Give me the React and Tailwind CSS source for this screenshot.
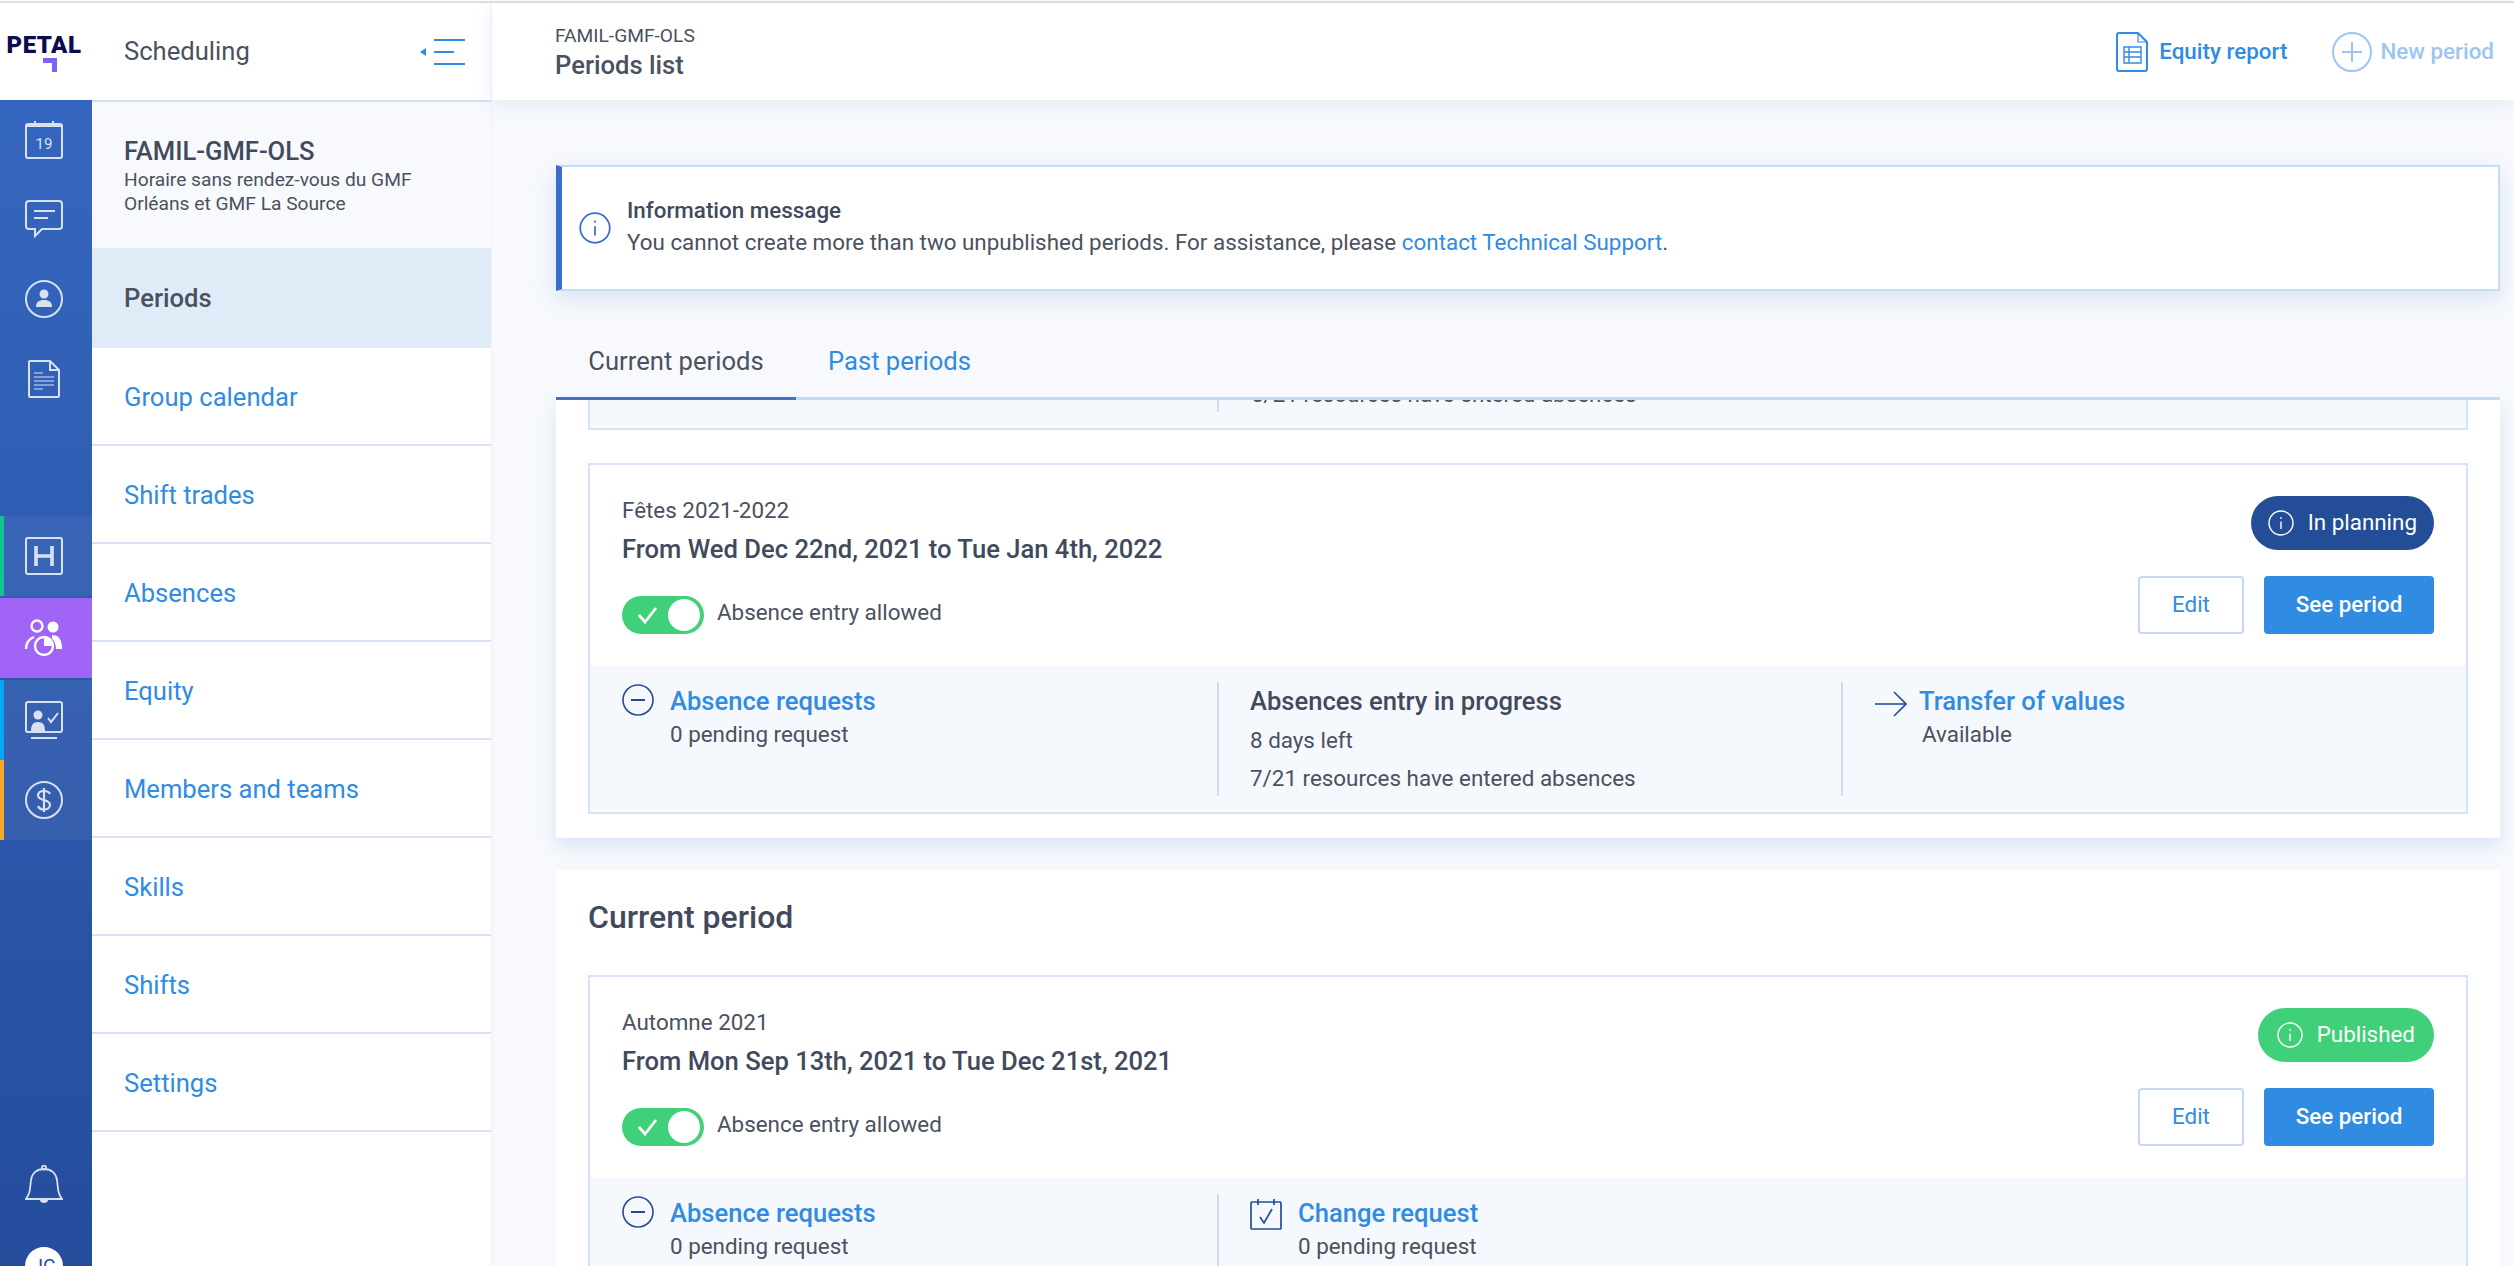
const navItems = ['Group calendar', 'Shift trades', 'Absences', 'Equity', 'Members and teams', 'Skills', 'Shifts', 'Settings'];

function InfoIcon({ className }) {
  return (
    <svg viewBox="0 0 26 26" fill="none" stroke="currentColor" strokeWidth="1.4" className={className}>
      <circle cx="13" cy="13" r="12" />
      <path d="M13 11.5v7.5" />
      <path d="M13 7v1.8" />
    </svg>
  );
}

function MinusIcon() {
  return (
    <svg viewBox="0 0 32 32" fill="none" stroke="#234d9b" className="w-[32px] h-[32px] shrink-0">
      <circle cx="16" cy="16" r="15" strokeWidth="1.6" />
      <path d="M9 16h14" strokeWidth="2" />
    </svg>
  );
}

function ArrowIcon() {
  return (
    <svg viewBox="0 0 32 32" fill="none" stroke="#234d9b" strokeWidth="1.6" className="w-[32px] h-[32px] shrink-0">
      <path d="M0 16h31" />
      <path d="M19 4l12 12-12 12" />
    </svg>
  );
}

function CalendarCheckIcon() {
  return (
    <svg viewBox="0 0 32 32" fill="none" stroke="#234d9b" strokeWidth="1.7" className="w-[32px] h-[32px] shrink-0">
      <rect x="1" y="4" width="30" height="27" rx="1" />
      <path d="M8 1v6M24 1v6" />
      <path d="M10 19l4 6 8-14" />
    </svg>
  );
}

function Toggle() {
  return (
    <div className="w-[82px] h-[38px] rounded-full bg-[#41d07a] flex items-center justify-between pl-[16px] pr-[4px] shrink-0">
      <svg viewBox="0 0 20 18" fill="none" stroke="white" strokeWidth="2.8" className="w-[20px] h-[18px]">
        <path d="M1 9l6 7L18 2" />
      </svg>
      <div className="w-[32px] h-[32px] rounded-full bg-white" />
    </div>
  );
}

function PeriodCard({ name, dates, status, statusClass, statusPad, children }) {
  return (
    <div className="border-2 border-[#d8e2f5] bg-white">
      <div className="h-[201px] flex justify-between pl-[32px] pr-[32px]">
        <div>
          <div className="pt-[32px] text-[22.4px] leading-[26px] text-[#4a5160]">{name}</div>
          <div className="mt-[11px] text-[25.6px] leading-[30px] font-medium text-[#414a5c]">{dates}</div>
          <div className="mt-[32px] flex items-center gap-[13px]">
            <Toggle />
            <span className="pb-[4px] text-[22.4px] text-[#4a5160]">Absence entry allowed</span>
          </div>
        </div>
        <div className="flex flex-col items-end pt-[31px]">
          <div className={`h-[54px] rounded-full flex items-center gap-[14px] text-white text-[22.4px] ${statusClass} ${statusPad}`}>
            <InfoIcon className="w-[26px] h-[26px]" />
            {status}
          </div>
          <div className="mt-[26px] flex gap-[20px]">
            <button className="w-[106px] h-[58px] rounded-[4px] border-2 border-[#c9d6f2] bg-white text-[22.4px] text-[#308be2]">Edit</button>
            <button className="w-[170px] h-[58px] rounded-[4px] bg-[#308be2] text-[22.4px] font-medium text-white">See period</button>
          </div>
        </div>
      </div>
      <div className="h-[146px] bg-[#f5f8fd] py-[16px] flex">{children}</div>
    </div>
  );
}

function RequestCol({ title, icon, width, border, iconPad }) {
  return (
    <div className={`h-[114px] flex gap-[16px] ${width} ${border}`}>
      <div className={iconPad}>{icon}</div>
      <div>
        <div className="text-[25.6px] leading-[38px] font-medium text-[#308be2]">{title}</div>
        <div className="text-[22.4px] leading-[28px] text-[#4a5160]">0 pending request</div>
      </div>
    </div>
  );
}

function RailSlot({ children, accent, active }) {
  return (
    <div className={`h-[80px] flex items-center justify-center border-l-4 ${accent} ${active ? 'bg-[#a064f7]' : 'bg-white/5'}`}>
      <div className="-ml-[8px] flex">{children}</div>
    </div>
  );
}

function Rail() {
  return (
    <div className="w-[92px] h-full shrink-0 bg-gradient-to-b from-[#3566bf] to-[#244d9c] overflow-hidden text-[#d9e1f0]">
      <div className="h-[79px] pr-[4px] flex items-center justify-center">
        <svg viewBox="0 0 38 38" fill="none" stroke="currentColor" strokeWidth="2" className="w-[38px] h-[38px]">
          <rect x="1" y="3" width="36" height="34" rx="2" />
          <path d="M10 0v3M28 0v3M1 5h36" />
          <text x="19" y="28" textAnchor="middle" fontSize="15" fill="currentColor" stroke="none" fontFamily="Roboto">19</text>
        </svg>
      </div>
      <div className="h-[80px] pr-[4px] flex items-center justify-center">
        <svg viewBox="0 0 38 38" fill="none" stroke="currentColor" strokeWidth="2" className="w-[38px] h-[38px]">
          <path d="M4 1h30a3 3 0 013 3v22a3 3 0 01-3 3H17l-7 7v-7H4a3 3 0 01-3-3V4a3 3 0 013-3z" />
          <path d="M9 11h21M9 18h14" />
        </svg>
      </div>
      <div className="h-[80px] pr-[4px] flex items-center justify-center">
        <svg viewBox="0 0 38 38" fill="none" stroke="currentColor" strokeWidth="2" className="w-[38px] h-[38px]">
          <circle cx="19" cy="19" r="18" />
          <circle cx="19" cy="14" r="4.5" fill="currentColor" stroke="none" />
          <path d="M11 27c0-5 3-7 8-7s8 2 8 7z" fill="currentColor" stroke="none" />
        </svg>
      </div>
      <div className="h-[80px] pr-[4px] mb-[97px] flex items-center justify-center">
        <svg viewBox="0 0 32 38" fill="none" stroke="currentColor" strokeWidth="2" className="w-[32px] h-[38px]">
          <path d="M2 1h20l9 9v26a1 1 0 01-1 1H2a1 1 0 01-1-1V2a1 1 0 011-1z" />
          <path d="M22 1v9h9" />
          <path d="M6 13h9M6 17h20M6 21h20M6 25h20M6 29h9" strokeWidth="1.2" />
        </svg>
      </div>
      <RailSlot accent="border-[#12c48f]">
        <svg viewBox="0 0 38 38" fill="none" stroke="currentColor" strokeWidth="2" className="w-[38px] h-[38px]">
          <rect x="1" y="1" width="36" height="36" rx="2" />
          <path d="M11 9v20M27 9v20M11 19h16" strokeWidth="3.6" />
        </svg>
      </RailSlot>
      <div className="h-[2px]" />
      <RailSlot accent="border-[#a064f7]" active>
        <svg viewBox="0 0 38 38" fill="none" stroke="white" strokeWidth="2.4" className="w-[38px] h-[38px]">
          <circle cx="12" cy="7" r="5.5" />
          <circle cx="28" cy="8" r="5.5" fill="white" stroke="none" />
          <path d="M1 30c0-7 3-10 8-12" />
          <path d="M27 16c6 0 10 3 10 14h-6c0-5-2-9-4-10z" fill="white" stroke="none" />
          <circle cx="19" cy="27" r="9" />
          <path d="M19 27v-9a9 9 0 019 9z" fill="white" stroke="none" />
        </svg>
      </RailSlot>
      <div className="h-[2px]" />
      <RailSlot accent="border-[#00a8f5]">
        <svg viewBox="0 0 38 38" fill="none" stroke="currentColor" strokeWidth="2" className="w-[38px] h-[38px]">
          <rect x="1" y="1" width="36" height="30" rx="2" />
          <path d="M6 37h26" />
          <circle cx="13" cy="14" r="4.5" fill="currentColor" stroke="none" />
          <path d="M6 30c0-6 2-9 7-9s7 3 7 9z" fill="currentColor" stroke="none" />
          <path d="M23 17l3 4 7-9" />
        </svg>
      </RailSlot>
      <RailSlot accent="border-[#f9a825]">
        <svg viewBox="0 0 38 38" fill="none" stroke="currentColor" strokeWidth="2" className="w-[38px] h-[38px]">
          <circle cx="19" cy="19" r="18" />
          <path d="M25 13c-1-2-3-3-6-3-4 0-6 2-6 4.500 0 6 12 3 12 9.500 0 3-3 4.500-6 4.500s-5-1-6-3.500M19 7v24" strokeWidth="2.200" />
        </svg>
      </RailSlot>
      <div className="mt-[325px] pr-[4px] flex justify-center">
        <svg viewBox="0 0 38 38" fill="none" stroke="currentColor" strokeWidth="1.8" className="w-[38px] h-[38px]">
          <circle cx="19" cy="2.500" r="2" />
          <path d="M1 34h36c-4-5-4-10-5-19-1-7-6-11-13-11S7 8 6 15C5 24 5 29 1 34z" />
          <path d="M15 35h8c0 4-8 4-8 0z" fill="currentColor" stroke="none" />
        </svg>
      </div>
      <div className="mt-[44px] ml-[25px] w-[38px] h-[38px] rounded-full bg-white text-[#234d9b] text-[19px] flex items-center justify-center">JC</div>
    </div>
  );
}

function Sidebar() {
  return (
    <div className="w-[400px] h-full shrink-0 flex flex-col bg-white border-r border-[#eef2fb]">
      <div className="h-[97px] shrink-0 flex items-center justify-between pl-[32px] pr-[25px]">
        <span className="text-[25.6px] text-[#4a5160]">Scheduling</span>
        <svg viewBox="0 0 46 26" fill="none" stroke="#308be2" strokeWidth="2" className="w-[46px] h-[26px]">
          <path d="M14 1h31M14 13h20M14 25h31" />
          <path d="M0 13l6-4v8z" fill="#308be2" stroke="none" />
        </svg>
      </div>
      <div className="h-[148px] shrink-0 bg-[#f7f9fd] border-t-2 border-[#d3dff4] pl-[32px] pt-[34px]">
        <div className="text-[25.6px] leading-[30px] font-medium text-[#414a5c]">FAMIL-GMF-OLS</div>
        <div className="mt-[2px] text-[19.2px] leading-[24px] text-[#4a5160] w-[320px]">Horaire sans rendez-vous du GMF Orléans et GMF La Source</div>
      </div>
      <div className="h-[100px] shrink-0 bg-[#e0ebf8] pl-[32px] pt-[1px] flex items-center text-[25.6px] font-medium text-[#4a5160]">Periods</div>
      {navItems.map(item => (
        <div key={item} className="h-[98px] shrink-0 border-b-2 border-[#dbe4f6] pl-[32px] pt-[2px] flex items-center text-[25.6px] text-[#308be2]">
          {item}
        </div>
      ))}
    </div>
  );
}

function TopBar() {
  return (
    <div className="h-[97px] shrink-0 bg-white flex items-center justify-between pl-[63px] pr-[20px] shadow-[0_4px_16px_rgba(190,205,235,0.35)] relative z-10">
      <div>
        <div className="text-[19.2px] leading-[26px] text-[#4a5160]">FAMIL-GMF-OLS</div>
        <div className="text-[25.6px] leading-[32px] font-medium text-[#4a5160]">Periods list</div>
      </div>
      <div className="flex items-center">
        <svg viewBox="0 0 32 40" fill="none" stroke="#308be2" strokeWidth="2" className="w-[32px] h-[40px]">
          <path d="M3 1h19l9 9v27a2 2 0 01-2 2H3a2 2 0 01-2-2V3a2 2 0 012-2z" />
          <path d="M22 1v9h9" strokeWidth="1.2" />
          <path d="M8 15h17v16H8zM8 20h17M8 25h17M13 15v16" strokeWidth="1.4" />
        </svg>
        <span className="ml-[11px] text-[22.4px] font-medium text-[#308be2]">Equity report</span>
        <svg viewBox="0 0 40 40" fill="none" stroke="#9cc5f2" strokeWidth="2" className="ml-[45px] w-[40px] h-[40px]">
          <circle cx="20" cy="20" r="19" />
          <path d="M10 20h20M20 10v20" />
        </svg>
        <span className="ml-[8px] text-[22.4px] font-medium text-[#9cc5f2]">New period</span>
      </div>
    </div>
  );
}

export default function App() {
  return (
    <div className="h-screen overflow-hidden flex flex-col bg-[#f7f9fd] font-['Roboto',sans-serif]">
      <div className="h-[3px] shrink-0 bg-white border-b-2 border-[#dcdce6]" />
      <div className="flex-1 flex min-h-0">
        <div className="flex flex-col shrink-0 h-full">
          <div className="flex flex-1 min-h-0">
            <div className="w-[92px] shrink-0 flex flex-col">
              <div className="h-[97px] shrink-0 bg-white flex flex-col items-center pt-[32px] pr-[4px]">
                <span className="text-[24px] leading-[20px] font-black tracking-[0.02em] text-[#0b0b4d]">PETAL</span>
                <div className="mt-[3px] ml-[12px] w-[14px] h-[14px] border-t-[5px] border-r-[5px] border-[#7b61f5]" />
              </div>
              <div className="flex-1 min-h-0"><Rail /></div>
            </div>
            <Sidebar />
          </div>
        </div>

        <div className="flex-1 min-w-0 flex flex-col">
          <TopBar />
          <div className="flex-1 min-h-0 overflow-hidden pl-[64px] pr-[14px]">
            <div className="mt-[65px] h-[126px] bg-white border-2 border-l-[6px] border-[#c5dcf5] border-l-[#3b6cc8] flex items-center pl-[17px] gap-[16px] shadow-[0_8px_20px_rgba(190,205,235,0.5)]">
              <InfoIcon className="w-[32px] h-[32px] text-[#3b6cc8]" />
              <div className="pb-[4px]">
                <div className="text-[22.4px] leading-[32px] font-medium text-[#414a5c]">Information message</div>
                <div className="text-[22.4px] leading-[32px] text-[#4a5160]">
                  You cannot create more than two unpublished periods. For assistance, please <span className="text-[#308be2]">contact Technical Support</span>.
                </div>
              </div>
            </div>

            <div className="mt-[39px] h-[70px] flex border-b-[3px] border-[#c5dcf5]">
              <div className="w-[240px] h-[70px] border-b-[3px] border-[#3b6cc8] pb-[4px] flex items-center justify-center text-[25.6px] text-[#4a5160]">Current periods</div>
              <div className="ml-[32px] h-[67px] pb-[4px] flex items-center text-[25.6px] text-[#308be2]">Past periods</div>
            </div>

            <div className="relative bg-white px-[32px] pb-[24px] shadow-[0_8px_16px_rgba(190,205,235,0.5)]">
              <div className="h-[30px] bg-[#f5f8fd] border-2 border-t-0 border-[#d8e2f5] overflow-hidden flex">
                <div className="w-[627px] shrink-0" />
                <div className="h-[12px] pl-[32px] border-l-2 border-[#d0dcf2]">
                  <div className="-mt-[25px] text-[22.4px] leading-[38px] text-[#4a5160]">5/21 resources have entered absences</div>
                </div>
              </div>
              <div className="mt-[33px]">
                <PeriodCard
                  name="Fêtes 2021-2022"
                  dates="From Wed Dec 22nd, 2021 to Tue Jan 4th, 2022"
                  status="In planning"
                  statusClass="bg-[#234d96]"
                  statusPad="pl-[17px] pr-[17px]"
                >
                  <RequestCol title="Absence requests" icon={<MinusIcon />} width="w-[627px] pl-[32px]" border="" iconPad="pt-[2px]" />
                  <div className="h-[114px] w-[624px] border-l-2 border-[#d0dcf2] pl-[31px] text-[#4a5160]">
                    <div className="text-[25.6px] leading-[38px] font-medium text-[#414a5c]">Absences entry in progress</div>
                    <div className="mt-[1px] text-[22.4px] leading-[38px]">8 days left</div>
                    <div className="text-[22.4px] leading-[38px]">7/21 resources have entered absences</div>
                  </div>
                  <div className="h-[114px] border-l-2 border-[#d0dcf2] pl-[32px] flex gap-[12px]">
                    <div className="pt-[6px]"><ArrowIcon /></div>
                    <div>
                      <div className="text-[25.6px] leading-[38px] font-medium text-[#308be2]">Transfer of values</div>
                      <div className="ml-[3px] text-[22.4px] leading-[28px] text-[#4a5160]">Available</div>
                    </div>
                  </div>
                </PeriodCard>
              </div>
            </div>

            <div className="mt-[32px] bg-white px-[32px] h-[500px]">
              <div className="pt-[27px] h-[105px] text-[32px] leading-[40px] font-medium text-[#414a5c]">Current period</div>
              <PeriodCard
                name="Automne 2021"
                dates="From Mon Sep 13th, 2021 to Tue Dec 21st, 2021"
                status="Published"
                statusClass="bg-[#41d07a]"
                statusPad="pl-[19px] pr-[19px]"
              >
                <RequestCol title="Absence requests" icon={<MinusIcon />} width="w-[627px] pl-[32px]" border="" iconPad="pt-[2px]" />
                <RequestCol title="Change request" icon={<CalendarCheckIcon />} width="w-[624px] pl-[31px]" border="border-l-2 border-[#d0dcf2]" iconPad="pt-[4px]" />
              </PeriodCard>
            </div>
          </div>
        </div>
      </div>
    </div>
  );
}
